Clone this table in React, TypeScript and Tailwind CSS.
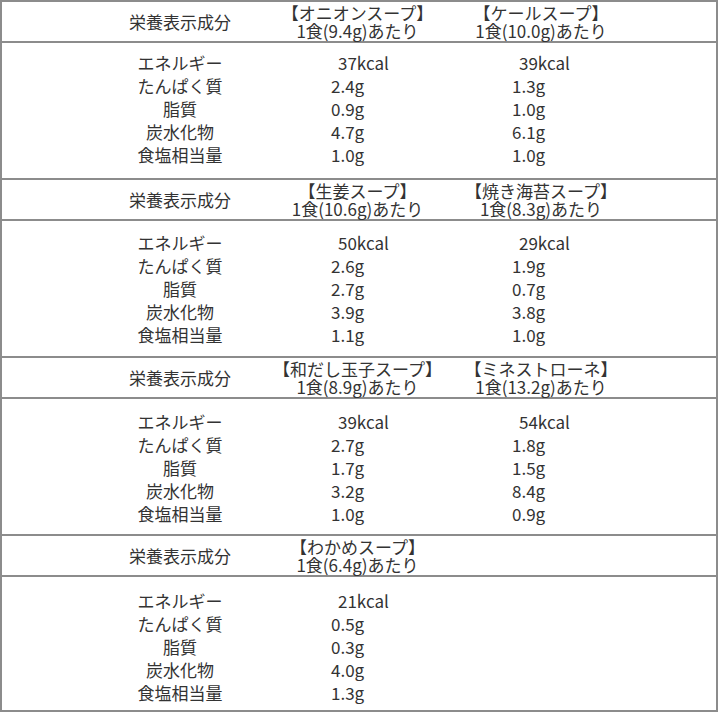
type Product = {
  name: string;
  serving: string;
  values: string[];
};

const labels = ["エネルギー", "たんぱく質", "脂質", "炭水化物", "食塩相当量"];

const groups: { products: Product[]; pt: string; h: string }[] = [
  {
    pt: "pt-[8px]",
    h: "h-[137px]",
    products: [
      { name: "【オニオンスープ】", serving: "1食(9.4g)あたり", values: ["37kcal", "2.4g", "0.9g", "4.7g", "1.0g"] },
      { name: "【ケールスープ】", serving: "1食(10.0g)あたり", values: ["39kcal", "1.3g", "1.0g", "6.1g", "1.0g"] },
    ],
  },
  {
    pt: "pt-[10px]",
    h: "h-[137px]",
    products: [
      { name: "【生姜スープ】", serving: "1食(10.6g)あたり", values: ["50kcal", "2.6g", "2.7g", "3.9g", "1.1g"] },
      { name: "【焼き海苔スープ】", serving: "1食(8.3g)あたり", values: ["29kcal", "1.9g", "0.7g", "3.8g", "1.0g"] },
    ],
  },
  {
    pt: "pt-[11px]",
    h: "h-[137px]",
    products: [
      { name: "【和だし玉子スープ】", serving: "1食(8.9g)あたり", values: ["39kcal", "2.7g", "1.7g", "3.2g", "1.0g"] },
      { name: "【ミネストローネ】", serving: "1食(13.2g)あたり", values: ["54kcal", "1.8g", "1.5g", "8.4g", "0.9g"] },
    ],
  },
  {
    pt: "pt-[12px]",
    h: "h-[133px]",
    products: [
      { name: "【わかめスープ】", serving: "1食(6.4g)あたり", values: ["21kcal", "0.5g", "0.3g", "4.0g", "1.3g"] },
    ],
  },
];

const colWidths = ["w-[175px]", "w-[192px]"];
const valuePad = ["pl-[61px]", "pl-[67px]"];

export default function App() {
  return (
    <div
      className="w-[720px] h-[720px] bg-white text-[#333] text-[17px]"
      style={{ fontFamily: '"Noto Sans CJK JP", "Noto Sans", sans-serif' }}
    >
      <div className="w-[718px] border-2 border-[#8c8c8c]">
        {groups.map((g, gi) => (
          <div key={gi}>
            {/* header */}
            <div className="flex h-[41px] border-b-2 border-[#8c8c8c]">
              <div className="w-[268px] pl-[88px] flex items-center justify-center">栄養表示成分</div>
              {g.products.map((p, i) => (
                <div key={i} className={`${colWidths[i]} flex flex-col items-center justify-center leading-[18px] whitespace-nowrap`}>
                  <span>{p.name}</span>
                  <span>{p.serving}</span>
                </div>
              ))}
            </div>
            {/* values */}
            <div
              className={`flex ${g.pt} ${g.h} ${gi < groups.length - 1 ? "border-b-2 border-[#8c8c8c]" : ""} leading-[23px]`}
            >
              <div className="w-[268px] pl-[88px] flex flex-col items-center">
                {labels.map((l) => (
                  <span key={l}>{l}</span>
                ))}
              </div>
              {g.products.map((p, i) => (
                <div key={i} className={`${colWidths[i]} ${valuePad[i]} flex flex-col`}>
                  {p.values.map((v, vi) => (
                    <span key={vi} className={vi === 0 ? "pl-[7px]" : ""}>
                      {v}
                    </span>
                  ))}
                </div>
              ))}
            </div>
          </div>
        ))}
      </div>
    </div>
  );
}
